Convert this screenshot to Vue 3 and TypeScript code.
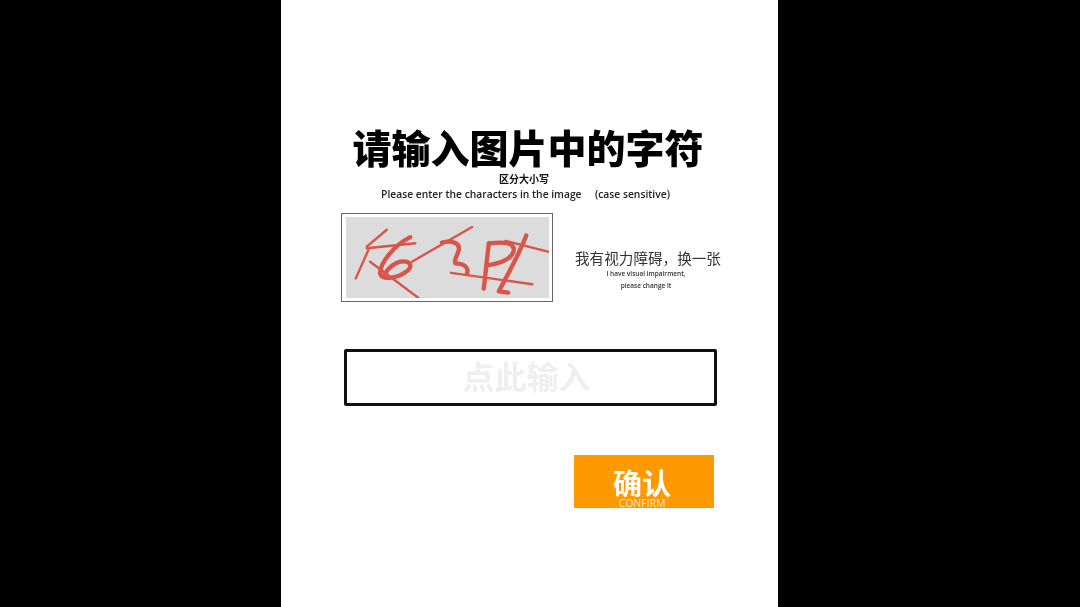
<script setup lang="ts">
const strokes: string[] = [
  'M155 75L95 125',
  'M95 130L240 115',
  'M100 135L62 220',
  'M105 170L250 278',
  'M230 170L410 67',
  'M347 203L590 237',
  'M510 108L637 140',
]
const heavy: string[] = [
  'M225 97C180 120 135 170 135 205C140 225 180 220 205 205C240 185 225 165 195 170C175 175 160 190 150 205',
  'M320 113C350 105 375 115 370 135C365 155 355 165 360 175C390 175 400 190 395 205',
  'M460 115L445 250',
  'M465 115C510 110 535 115 535 135C530 165 490 175 460 180',
  'M572 92C550 150 510 220 490 258L518 262',
]
</script>

<template>
  <div class="page">
    <main class="panel">
      <h1 class="title">请输入图片中的字符</h1>
      <p class="sub-cn">区分大小写</p>
      <p class="sub-en">Please enter the characters in the image &nbsp;&nbsp;&nbsp; (case sensitive)</p>

      <div class="captcha-row">
        <div class="captcha">
          <svg class="captcha-img" viewBox="33 37 607 241" preserveAspectRatio="none">
            <path v-for="d in strokes" :key="d" :d="d" class="thin" />
            <path v-for="d in heavy" :key="d" :d="d" class="thick" />
          </svg>
        </div>
        <div class="change">
          <div class="change-cn">我有视力障碍，换一张</div>
          <div class="change-en">I have visual impairment,</div>
          <div class="change-en">please change it</div>
        </div>
      </div>

      <div class="input-box">点此输入</div>

      <div class="actions">
        <button class="confirm">
          <span class="confirm-cn">确认</span>
          <span class="confirm-en">CONFIRM</span>
        </button>
      </div>
    </main>
  </div>
</template>

<style>
html,
body {
  margin: 0;
  background: #000;
}
</style>

<style scoped>
.page {
  height: 607px;
  background: #000;
  display: flex;
  overflow: hidden;
  padding-left: 281px;
  box-sizing: border-box;
}

.panel {
  width: 497px;
  height: 607px;
  background: #fff;
  display: flex;
  flex-direction: column;
  align-items: flex-start;
  padding: 124px 0 0 60px;
  box-sizing: border-box;
  font-family: "Open Sans", "Noto Sans CJK SC", sans-serif;
  color: #111;
  filter: blur(0.6px);
}

.title {
  width: 374px;
  margin: 0;
  text-align: center;
  font-family: "Noto Sans CJK SC", sans-serif;
  font-size: 39px;
  line-height: 44px;
  font-weight: 900;
  color: #000;
}

.sub-cn {
  width: 366px;
  margin: 4px 0 0;
  text-align: center;
  font-family: "Noto Sans CJK SC", sans-serif;
  font-size: 10px;
  line-height: 14px;
  font-weight: 700;
}

.sub-en {
  width: 369px;
  margin: 1px 0 0;
  text-align: center;
  font-size: 10.3px;
  line-height: 15px;
  font-weight: 600;
  color: #222;
  white-space: nowrap;
}

.captcha-row {
  display: flex;
  align-items: flex-start;
  margin-top: 11px;
}

.captcha {
  width: 212px;
  height: 89px;
  border: 1px solid #666;
  box-sizing: border-box;
  padding: 3px 3px 3px 4px;
}

.captcha-img {
  display: block;
  width: 203px;
  height: 81px;
  background: #dcdcdc;
}

.thin,
.thick {
  fill: none;
  stroke: #d9544a;
  stroke-linecap: round;
  stroke-linejoin: round;
}

.thin {
  stroke-width: 7;
}

.thick {
  stroke-width: 13;
}

.change {
  margin: 35px 0 0 22px;
  width: 146px;
  text-align: center;
}

.change-cn {
  font-family: "Noto Sans CJK SC", sans-serif;
  font-size: 14.6px;
  line-height: 20px;
  color: #333;
  white-space: nowrap;
}

.change-en {
  font-size: 6.5px;
  line-height: 12px;
  font-weight: 600;
  color: #333;
  white-space: nowrap;
  padding-right: 4px;
}

.input-box {
  width: 373px;
  height: 57px;
  margin: 47px 0 0 3px;
  border: 3px solid #111;
  border-radius: 2px;
  box-sizing: border-box;
  text-align: center;
  font-family: "Noto Sans CJK SC", sans-serif;
  font-size: 32px;
  line-height: 46px;
  font-weight: 700;
  color: #efefef;
  padding-right: 8px;
}

.actions {
  margin: 49px 0 0 233px;
}

.confirm {
  display: flex;
  flex-direction: column;
  align-items: center;
  width: 140px;
  height: 53px;
  padding: 11px 4px 0 0;
  border: 0;
  background: #ff9900;
  color: #fff;
}

.confirm-cn {
  font-family: "Noto Sans CJK SC", sans-serif;
  font-size: 29px;
  line-height: 33px;
  font-weight: 700;
}

.confirm-en {
  font-family: "Open Sans", sans-serif;
  font-size: 10.5px;
  line-height: 10px;
  margin-top: -1px;
  color: #ffe9c4;
}
</style>
